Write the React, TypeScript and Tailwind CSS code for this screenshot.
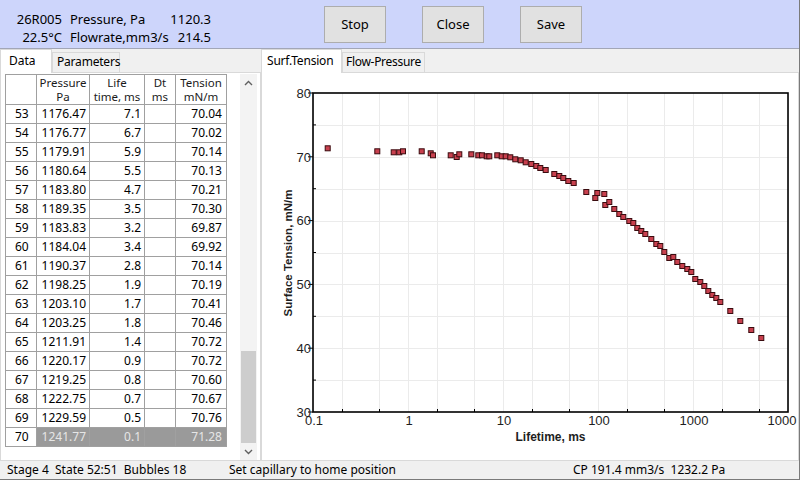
import React from 'react'

const rows: [number, string, string, string][] = [
  [53, '1176.47', '7.1', '70.04'],
  [54, '1176.77', '6.7', '70.02'],
  [55, '1179.91', '5.9', '70.14'],
  [56, '1180.64', '5.5', '70.13'],
  [57, '1183.80', '4.7', '70.21'],
  [58, '1189.35', '3.5', '70.30'],
  [59, '1183.83', '3.2', '69.87'],
  [60, '1184.04', '3.4', '69.92'],
  [61, '1190.37', '2.8', '70.14'],
  [62, '1198.25', '1.9', '70.19'],
  [63, '1203.10', '1.7', '70.41'],
  [64, '1203.25', '1.8', '70.46'],
  [65, '1211.91', '1.4', '70.72'],
  [66, '1220.17', '0.9', '70.72'],
  [67, '1219.25', '0.8', '70.60'],
  [68, '1222.75', '0.7', '70.67'],
  [69, '1229.59', '0.5', '70.76'],
  [70, '1241.77', '0.1', '71.28'],
]

// plot frame (page coords) and decade width of the log axis
const X0 = 313
const Y0 = 93
const PW = 475
const PH = 319
const DEC = 95
const ys = (v: number) => Y0 + PH - (v - 30) * (PH / 50)

// marker offsets from the top-left corner of the plot frame
const pts: [number, number][] = [
  [14.7, 55.3], [64.3, 58.3], [80.7, 59.3], [86.3, 59.3], [90, 58.3], [108.7, 58.3],
  [117.7, 60.3], [120, 62.3], [137.7, 62.3], [143.7, 64], [146.3, 61.3], [158.3, 61.3],
  [165.3, 62.3], [169, 62.3], [173.7, 63.3], [176.3, 63.3], [184.3, 62.3], [188.7, 63.3],
  [192.7, 63.3], [197.3, 64.3], [202.3, 66.3], [207.7, 67.3], [212.7, 69.3], [218.3, 71],
  [223.3, 73], [227.3, 75], [232.7, 77], [241.3, 81], [246.3, 83], [250.3, 85],
  [255.3, 88], [260.7, 90], [273.3, 99], [282.3, 105], [284.3, 100], [291.3, 101],
  [292.3, 112], [296.3, 109], [301.3, 116], [306.3, 121], [310.3, 124], [316.3, 128],
  [320.3, 130], [324.3, 135], [328.3, 138], [332.3, 141], [338.3, 146], [343.3, 151],
  [347.3, 153], [351.3, 159], [356.3, 165], [360.3, 164], [364.3, 169], [369.3, 173],
  [374.3, 176], [378.3, 179], [382.3, 186], [387.3, 189], [391.3, 193], [395.3, 198],
  [399.3, 202], [403.3, 205], [407.3, 209], [417.3, 218], [427.3, 228], [438.3, 237],
  [448.3, 245],
]

function Chart() {
  const vx: number[] = []
  for (let k = 0; k < 5; k++) for (const m of [1, 2, 5]) vx.push(Math.round(X0 + (k + Math.log10(m)) * DEC))
  vx.push(X0 + 5 * DEC)
  const hy = [35, 40, 45, 50, 55, 60, 65, 70, 75].map((v) => Math.round(ys(v)))
  const xLabels = ['0.1', '1', '10', '100', '1000', '1000']
  return (
    <svg width={536} height={387} viewBox="262 73 536 387" className="block" style={{ fontFamily: "'Liberation Sans', Arial, sans-serif" }}>
      {vx.map((x, i) => <line key={'gx' + i} x1={x + 0.5} x2={x + 0.5} y1={Y0} y2={Y0 + PH} stroke="#ebebeb" />)}
      {hy.map((y, i) => <line key={'gy' + i} x1={X0} x2={X0 + PW} y1={y + 0.5} y2={y + 0.5} stroke="#ebebeb" />)}

      {/* ticks */}
      {[30, 40, 50, 60, 70, 80].map((v) => <line key={'ty' + v} x1={X0 - 5} x2={X0} y1={ys(v)} y2={ys(v)} stroke="#000" />)}
      {[35, 45, 55, 65, 75].map((v) => <line key={'my' + v} x1={X0} x2={X0 + 3} y1={ys(v)} y2={ys(v)} stroke="#000" />)}
      {vx.filter((_, i) => i % 3 !== 0 && i < 15).map((x) => <line key={'mx' + x} x1={x + 0.5} x2={x + 0.5} y1={Y0 + PH - 3} y2={Y0 + PH} stroke="#000" />)}

      <rect x={X0} y={Y0} width={PW} height={PH} fill="none" stroke="#000" strokeWidth={1.6} />

      {pts.map(([dx, dy], i) => (
        <rect key={'p' + i} x={X0 + dx - 2.5} y={Y0 + dy - 2.5} width={5} height={5} fill="#c8404e" stroke="#3a0b0f" strokeWidth={1} />
      ))}

      {[30, 40, 50, 60, 70, 80].map((v) => (
        <text key={'ly' + v} x={311} y={ys(v) + 4.7} textAnchor="end" fontSize={13} fill="#1e1e1e">{v}</text>
      ))}
      {xLabels.map((t, i) => (
        <text key={'lx' + i} x={i === 5 ? 782 : X0 + i * DEC + 1} y={425} textAnchor="middle" fontSize={13} fill="#1e1e1e">{t}</text>
      ))}

      <text x={287.5} y={253} transform="rotate(-90 287.5 253)" textAnchor="middle" dominantBaseline="central" fontSize={11.5} fontWeight="bold" fill="#1e1e1e">
        Surface Tension, mN/m
      </text>
      <text x={550.5} y={441} textAnchor="middle" fontSize={12} fontWeight="bold" fill="#1e1e1e">Lifetime, ms</text>
    </svg>
  )
}

function Chevron({ up }: { up?: boolean }) {
  return (
    <svg width="9" height="6" viewBox="0 0 9 6">
      <path d={up ? 'M1 5 L4.5 1.5 L8 5' : 'M1 1 L4.5 4.5 L8 1'} fill="none" stroke="#606060" strokeWidth={1.4} />
    </svg>
  )
}

export default function App() {
  const btn = 'w-[62px] h-[37px] bg-[#e1e1e1] border border-[#adadad] text-[13px] flex items-center justify-center'
  const cell = 'h-[19px] border-r border-b border-[#a0a0a0] leading-[18px] text-right pr-[3px]'
  const head = 'h-[30px] border-r border-b border-[#a0a0a0] flex flex-col items-center justify-center text-[11.5px] leading-[13.5px] text-[#1a1a1a] whitespace-nowrap'

  return (
    <div className="w-[800px] h-[480px] flex flex-col bg-[#f0f0f0] font-['Noto_Sans',sans-serif] text-[12px] text-black overflow-hidden border-r border-b border-[#7a7a7a]">
      {/* top bar */}
      <div className="h-[49px] shrink-0 flex bg-[#cdd5fb] border-b border-[#a2a6b6]">
        <div className="flex flex-col pt-[10px] text-[13px] leading-[18px]">
          <div className="flex">
            <span className="w-[62px] text-right">26R005</span>
            <span className="ml-[8px] w-[96px]">Pressure, Pa</span>
            <span className="w-[45px] text-right">1120.3</span>
          </div>
          <div className="flex">
            <span className="w-[62px] text-right">22.5°C</span>
            <span className="ml-[8px] w-[96px]">Flowrate,mm3/s</span>
            <span className="w-[45px] text-right">214.5</span>
          </div>
        </div>
        <div className="flex gap-[36px] ml-[113px] pt-[6px]">
          <button className={btn}>Stop</button>
          <button className={btn}>Close</button>
          <button className={btn}>Save</button>
        </div>
      </div>

      <div className="h-[412px] shrink-0 flex">
        {/* data panel */}
        <div className="w-[261px] flex flex-col">
          <div className="h-[23px] flex items-end whitespace-nowrap">
            <div className="relative z-10 h-[24px] mb-[-1px] w-[52px] bg-white border border-b-0 border-[#d9d9d9] pl-[8px] pt-[2px] leading-[18px]">Data</div>
            <div className="h-[20px] w-[68px] bg-[#f0f0f0] border border-b-0 border-[#d9d9d9] pl-[4px] leading-[18px] tracking-[-0.2px]">Parameters</div>
          </div>
          <div className="flex-1 bg-white border border-[#d9d9d9] flex">
            <div className="flex-1 pl-[4px] pt-[1px]">
              <div className="w-[222px] border-l border-t border-[#a0a0a0] grid grid-cols-[31px_53px_55px_31px_51px]">
                <div className={head}></div>
                <div className={head}><span>Pressure</span><span>Pa</span></div>
                <div className={head}><span>Life</span><span>time, ms</span></div>
                <div className={head}><span>Dt</span><span>ms</span></div>
                <div className={head}><span>Tension</span><span>mN/m</span></div>
                {rows.map(([n, p, life, t]) => {
                  const sel = n === 70
                  const val = sel ? ' bg-[#9a9a9a] text-[#e6e6e6]' : ''
                  return (
                    <React.Fragment key={n}>
                      <div className="h-[19px] border-r border-b border-[#a0a0a0] leading-[18px] pl-[9px]">{n}</div>
                      <div className={cell + val}>{p}</div>
                      <div className={cell + val}>{life}</div>
                      <div className={cell + val}></div>
                      <div className={cell + val + ' pr-[4px]'}>{t}</div>
                    </React.Fragment>
                  )
                })}
              </div>
            </div>
            <div className="w-[17px] mr-[3px] mt-[1px] flex flex-col bg-[#f3f3f3]">
              <div className="h-[17px] flex items-center justify-center"><Chevron up /></div>
              <div className="flex-1 flex flex-col justify-end">
                <div className="h-[92px] mx-[1px] bg-[#cdcdcd]"></div>
              </div>
              <div className="h-[17px] flex items-center justify-center"><Chevron /></div>
            </div>
          </div>
        </div>

        {/* chart panel */}
        <div className="flex-1 flex flex-col">
          <div className="h-[23px] flex items-end whitespace-nowrap">
            <div className="relative z-10 h-[24px] mb-[-1px] w-[81px] bg-white border border-b-0 border-[#d9d9d9] pl-[5px] pt-[2px] leading-[18px] tracking-[-0.2px]">Surf.Tension</div>
            <div className="h-[20px] w-[83px] bg-[#f0f0f0] border border-b-0 border-[#d9d9d9] pl-[3px] leading-[18px] tracking-[-0.3px]">Flow-Pressure</div>
          </div>
          <div className="flex-1 bg-white border border-[#d9d9d9] overflow-hidden">
            <Chart />
          </div>
        </div>
      </div>

      {/* status bar */}
      <div className="flex-1 flex leading-[18px] whitespace-pre">
        <span className="w-[229px] pl-[7px]">Stage 4  State 52:51  Bubbles 18</span>
        <span className="w-[344px]">Set capillary to home position</span>
        <span>CP 191.4 mm3/s  1232.2 Pa</span>
      </div>
    </div>
  )
}
